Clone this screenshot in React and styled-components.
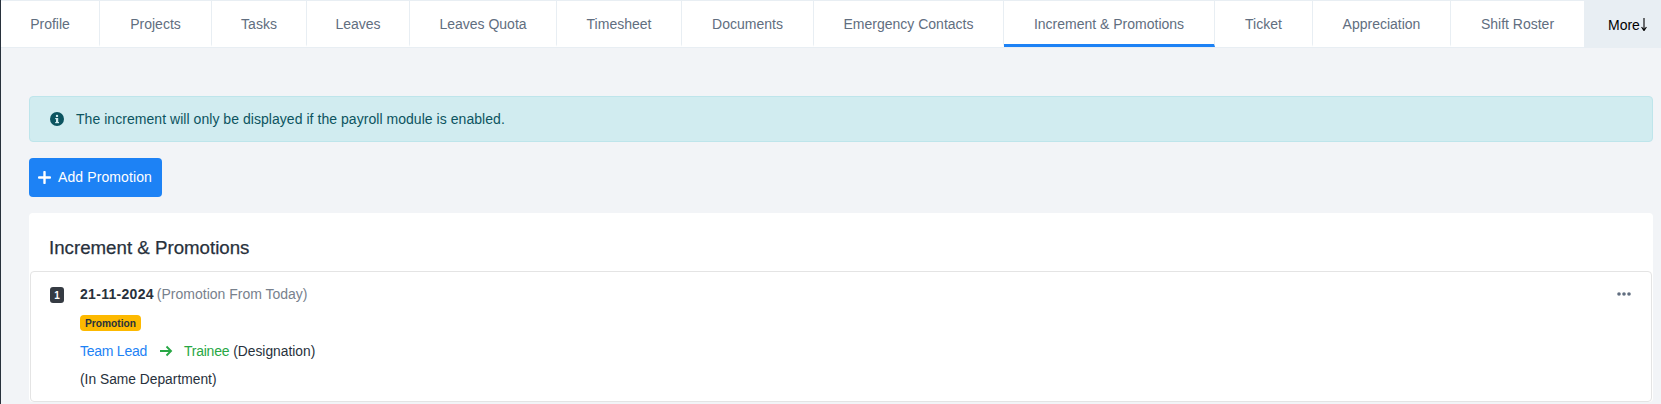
import React from "react";
import styled, { createGlobalStyle } from "styled-components";

const Global = createGlobalStyle`
  html, body { margin: 0; padding: 0; background: #f2f4f7; }
  body { font-family: "Liberation Sans", Arial, sans-serif; font-size: 14px; color: #28313c; overflow: hidden; }
`;

const Page = styled.div`
  width: 1661px;
  height: 404px;
  box-sizing: border-box;
  border-left: 1px solid #28313c;
  overflow: hidden;
  display: flex;
  flex-direction: column;
`;

const TabBar = styled.nav`
  display: flex;
  height: 48px;
  box-sizing: border-box;
  background: #fff;
  border-top: 1px solid #e8eef3;
  border-bottom: 1px solid #e8eef3;
`;

const Tab = styled.a`
  box-sizing: border-box;
  height: 46px;
  padding-top: 3px;
  display: flex;
  align-items: center;
  justify-content: center;
  width: ${p => p.$w}px;
  color: #616e80;
  font-size: 14px;
  white-space: nowrap;
  border-right: 1px solid #e8eef3;
  border-bottom: 3px solid ${p => (p.$active ? "#1d82f5" : "transparent")};
  ${p => (p.$last ? "border-right: none;" : "")}
`;

const MoreTab = styled.a`
  flex: 1;
  display: flex;
  align-items: center;
  gap: 1px;
  padding: 1px 0 0 24px;
  background: #e8eef3;
  color: #000;
  font-size: 14px;
`;

const Content = styled.main`
  display: flex;
  flex-direction: column;
  align-items: flex-start;
  padding: 48px 8px 0 28px;
`;

const Alert = styled.div`
  box-sizing: border-box;
  width: 100%;
  height: 46px;
  display: flex;
  align-items: center;
  gap: 12px;
  padding: 0 20px;
  background: #d1ecf0;
  border: 1px solid #bee5eb;
  border-radius: 4px;
  color: #0c5460;
  font-size: 14px;
  letter-spacing: 0.045px;
`;

const AddButton = styled.button`
  box-sizing: border-box;
  margin-top: 16px;
  width: 133px;
  height: 39px;
  display: flex;
  align-items: center;
  gap: 7px;
  padding: 0 9px 1px;
  background: #1d82f5;
  border: none;
  border-radius: 4px;
  color: #fff;
  font-family: inherit;
  font-size: 14px;
  letter-spacing: 0.1px;
`;

const Card = styled.section`
  margin-top: 16px;
  width: 100%;
  background: #fff;
  border-radius: 4px;
`;

const CardTitle = styled.h3`
  margin: 0;
  padding: 23px 20px 0;
  height: 58px;
  box-sizing: border-box;
  font-size: 18.7px;
  line-height: 23px;
  font-weight: 400;
  -webkit-text-stroke: 0.25px #28313c;
  color: #28313c;
`;

const Entry = styled.article`
  box-sizing: border-box;
  height: 131px;
  padding: 14px 20px 14px 19px;
  margin: 0 1px;
  display: flex;
  background: #fff;
  border: 1px solid #e4e4e4;
  border-radius: 4px;
`;

const IndexBadge = styled.span`
  box-sizing: border-box;
  flex: none;
  width: 14px;
  height: 16px;
  margin: 1px 16px 0 0;
  display: flex;
  align-items: center;
  justify-content: center;
  background: #353b43;
  border-radius: 3px;
  color: #fff;
  font-size: 10px;
  font-weight: 700;
`;

const Body = styled.div`
  flex: 1;
  display: flex;
  flex-direction: column;
  align-items: flex-start;
`;

const Line = styled.div`
  display: flex;
  align-items: center;
  height: 16px;
  margin-top: ${p => p.$mt || 0}px;
  font-size: ${p => p.$size || 14}px;
  white-space: pre;
  color: #28313c;
`;

const DateText = styled.b`
  font-weight: 700;
  letter-spacing: 0.3px;
  color: #28313c;
`;

const Muted = styled.span`
  color: #78818d;
  margin-left: 3px;
`;

const Tag = styled.span`
  box-sizing: border-box;
  height: 16px;
  margin-top: 13px;
  padding: 0 5px;
  display: flex;
  align-items: center;
  background: #fdb900;
  border-radius: 4px;
  color: #28313c;
  font-size: 10.2px;
  font-weight: 700;
`;

const Colored = styled.span`
  color: ${p => p.$c};
  margin-right: 4px;
  font-size: 14px;
  letter-spacing: -0.25px;
`;

const ArrowIcon = styled.svg`
  width: 14px;
  height: 14px;
  margin: 0 11px 0 8px;
  flex: none;
`;

const Dots = styled.svg`
  width: 14px;
  height: 4px;
  margin: 6px 0 0 0;
  flex: none;
`;

const tabs = [
  ["Profile", 99], ["Projects", 112], ["Tasks", 95], ["Leaves", 103], ["Leaves Quota", 147],
  ["Timesheet", 125], ["Documents", 132], ["Emergency Contacts", 190], ["Increment & Promotions", 211, true],
  ["Ticket", 98], ["Appreciation", 138], ["Shift Roster", 133, false, true],
];

export default function App() {
  return (
    <Page>
      <Global />
      <TabBar>
        {tabs.map(([label, w, active, last]) => (
          <Tab key={label} $w={w} $active={active} $last={last}>{label}</Tab>
        ))}
        <MoreTab>
          More
          <svg width="6" height="13" viewBox="0 0 6 13" aria-hidden="true">
            <path d="M3 0v12M.6 9 3 12.6 5.4 9" fill="none" stroke="#000" strokeWidth="1.1" />
          </svg>
        </MoreTab>
      </TabBar>
      <Content>
        <Alert>
          <svg width="14" height="14" viewBox="0 0 14 14" aria-hidden="true">
            <circle cx="7" cy="7" r="7" fill="#0c5460" />
            <rect x="6" y="6" width="2.2" height="5" fill="#d1ecf0" />
            <rect x="5.2" y="6" width="2.4" height="1.2" fill="#d1ecf0" />
            <rect x="5.2" y="10" width="3.8" height="1.2" fill="#d1ecf0" />
            <circle cx="7" cy="3.9" r="1.2" fill="#d1ecf0" />
          </svg>
          The increment will only be displayed if the payroll module is enabled.
        </Alert>
        <AddButton>
          <svg width="13" height="13" viewBox="0 0 13 13" aria-hidden="true">
            <path d="M6.5 1v11M1 6.5h11" stroke="#fff" strokeWidth="2.4" strokeLinecap="round" />
          </svg>
          Add Promotion
        </AddButton>
        <Card>
          <CardTitle>Increment &amp; Promotions</CardTitle>
          <Entry>
            <IndexBadge>1</IndexBadge>
            <Body>
              <Line><DateText>21-11-2024</DateText><Muted>(Promotion From Today)</Muted></Line>
              <Tag>Promotion</Tag>
              <Line $mt={12} $size={13.8}>
                <Colored $c="#1d82f5">Team Lead</Colored>
                <ArrowIcon viewBox="0 0 14 14" aria-hidden="true">
                  <path d="M1 7h11M7.5 2.5 12 7l-4.5 4.5" fill="none" stroke="#28a745" strokeWidth="1.9" />
                </ArrowIcon>
                <Colored $c="#28a745">Trainee</Colored>(Designation)
              </Line>
              <Line $mt={12} $size={13.8}>(In Same Department)</Line>
            </Body>
            <Dots viewBox="0 0 14 4" aria-hidden="true">
              <circle cx="2" cy="2" r="1.8" fill="#616e80" />
              <circle cx="7" cy="2" r="1.8" fill="#616e80" />
              <circle cx="12" cy="2" r="1.8" fill="#616e80" />
            </Dots>
          </Entry>
        </Card>
      </Content>
    </Page>
  );
}
